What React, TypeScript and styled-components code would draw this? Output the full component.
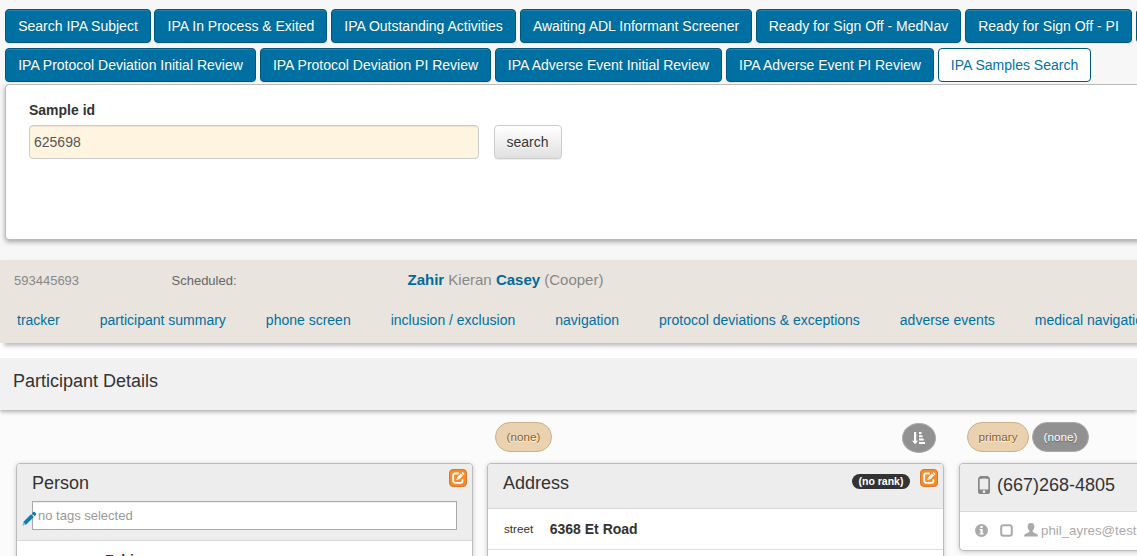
import React from "react";
import styled, { createGlobalStyle } from "styled-components";

const Global = createGlobalStyle`
  * { box-sizing: border-box; }
  html, body { margin: 0; overflow: hidden; background: #f7f7f7; }
  body { font-family: "Liberation Sans", Arial, sans-serif; font-size: 14px; line-height: 20px; color: #333; }
`;
const Page = styled.div`height: 556px; width: 1137px; overflow: hidden; display: flex; flex-direction: column;`;
const Nav = styled.nav`padding: 9px 0 0 5px; display: flex; flex-direction: column; gap: 5px; flex: none;`;
const NavRow = styled.div`display: flex; gap: 4px; white-space: nowrap;`;
const Tab = styled.a<{ $w: number; $active?: boolean; $pull?: boolean }>`
  flex: none; width: ${p => p.$w}px; height: 34px; text-align: center; line-height: 20px;
  padding: 6px 0 6px ${p => (p.$pull ? "1px" : "0")};
  margin-left: ${p => (p.$pull ? "-1px" : "0")};
  border: 1px solid #00567d; border-radius: 4px;
  color: ${p => (p.$active ? "#0072a3" : "#fff")};
  background: ${p => (p.$active ? "#fff" : "#0070a2")};
  box-shadow: ${p => (p.$active ? "none" : "inset 0 1px 0 rgba(255,255,255,.15), 0 1px 1px rgba(0,0,0,.075)")};
  text-shadow: ${p => (p.$active ? "none" : "0 -1px 0 rgba(0,0,0,.2)")};
`;
const SearchPanel = styled.section`
  flex: none; margin: 2px -10px 0 5px; height: 156px; padding: 15px 23px; background: #fff;
  border: 1px solid #bbb; border-radius: 4px; box-shadow: 0 2px 5px rgba(0,0,0,.33);
  clip-path: inset(0 0 -10px -10px);
`;
const Label = styled.label`display: block; font-weight: bold; margin-bottom: 5px; height: 20px;`;
const FieldRow = styled.div`display: flex; gap: 15px;`;
const Field = styled.div`
  width: 450px; height: 34px; padding: 6px 4px; color: #555; background: #fff4e0;
  border: 1px solid #ccc; border-radius: 4px; box-shadow: inset 0 1px 1px rgba(0,0,0,.075);
`;
const SearchButton = styled.button`
  width: 68px; height: 34px; padding: 0 1px 0 0; font: inherit; color: #333; border: 1px solid #ccc; border-radius: 4px;
  background: linear-gradient(#fff, #e0e0e0); text-shadow: 0 1px 0 #fff; box-shadow: 0 1px 1px rgba(0,0,0,.075);
`;
const Subject = styled.section`
  flex: none; margin-top: 20px; height: 83px; background: #e9e4de; position: relative; z-index: 1;
  box-shadow: 4px 3px 4px rgba(0,0,0,.25); padding-top: 11px;
`;
const SubjectLine = styled.div`display: grid; grid-template-columns: 157.500px 236px 1fr; padding-left: 14px; color: #888; font-size: 13px; height: 20px;`;
const Scheduled = styled.span`color: #666;`;
const Name = styled.span`font-size: 15px; line-height: 18px; b { color: #006a9b; }`;
const Links = styled.div`display: flex; gap: 40px; white-space: nowrap; padding: 19px 0 0 17px; color: #0070a2;`;
const TitleWrap = styled.div`flex: none; background: #fff; padding-top: 15px;`;
const TitleBar = styled.header`
  height: 52px; padding: 13px; background: #f1f1f1; font-size: 18px; position: relative;
  box-shadow: 0 2px 4px rgba(0,0,0,.3); clip-path: inset(0 0 -10px 0);
`;
const Details = styled.main`
  flex: 1; min-height: 0; background: #fbfbfb; padding: 12px 0 0 16px; display: grid;
  grid-template-columns: 457px 457px 457px; column-gap: 14.5px;
`;
const Column = styled.div<{ $nudge?: boolean }>`
  display: flex; flex-direction: column; margin: 0 ${p => (p.$nudge ? "0.5px 0 -0.5px" : "0")};
`;
const Badges = styled.div`display: flex; gap: 3px; height: 30px; margin: 0 8px 11px;`;
const Pill = styled.span<{ $w: number; $dark?: boolean }>`
  width: ${p => p.$w}px; height: 30px; border-radius: 15px; text-align: center; font-size: 11.7px; line-height: 28px;
  border: 1px solid ${p => (p.$dark ? "#aaa" : "#cbb08a")};
  background: ${p => (p.$dark ? "#919191" : "#ead2b0")};
  color: ${p => (p.$dark ? "#fff" : "#8a5f22")};
  text-shadow: 0 1px 1px ${p => (p.$dark ? "rgba(0,0,0,.3)" : "#fff")};
`;
const SortButton = styled.span`
  margin: 1px 0 0 auto; width: 34px; height: 30px; border-radius: 50%; border: 1px solid #aaa;
  background: #919191; color: #fff; display: grid; place-items: center;
`;
const Card = styled.article<{ $h: number }>`
  height: ${p => p.$h}px; border: 1px solid #bbb; border-radius: 4px; background: #fff; overflow: hidden;
  box-shadow: 0 1px 5px rgba(0,0,0,.2);
`;
const CardHead = styled.div<{ $h: number }>`
  height: ${p => p.$h}px; background: #ededed; border-bottom: 1px solid #d8d8d8; padding: 5px 5px 0 15px;
`;
const HeadLine = styled.div`display: flex; gap: 10px; height: 32px;`;
const CardTitle = styled.h4`margin: 0; font-size: 18px; line-height: 28px; font-weight: normal; flex: 1;`;
const EditButton = styled.span`
  width: 18px; height: 18px; border-radius: 4px; background: #f68b2c; border: 1px solid #d8762a; color: #fff;
  display: grid; place-items: center;
`;
const Rank = styled.span`
  width: 58px; height: 15px; margin-top: 5px; border-radius: 8px; background: #333; color: #fff;
  font-size: 10.5px; line-height: 15px; font-weight: bold; text-align: center;
`;
const TagInput = styled.div`
  width: 425px; height: 29px; border: 1px solid #aaa; background: #fff; color: #999; font-size: 13px;
  line-height: 28px; padding-left: 5px; position: relative; box-shadow: inset 0 1px 1px rgba(0,0,0,.07);
`;
const PencilSlot = styled.span`position: absolute; left: -11px; top: 9px; width: 16px; height: 16px; line-height: 0;`;
const Row = styled.div`
  height: 41px; border-bottom: 1px solid #ddd; display: flex; align-items: center; padding-left: 16px; gap: 16.5px;
  font-size: 11.7px; b { font-size: 14px; }
`;
const PersonRow = styled.div`padding: 9px 0 0 88px; font-weight: bold;`;
const Phone = styled.div`display: flex; align-items: center; gap: 7px; margin-left: 3px; height: 32px; font-size: 18px; svg { color: #888; }`;
const Contact = styled.div`
  display: flex; align-items: center; height: 38px; padding-left: 15px; color: #aaa; font-size: 13.3px;
  svg { margin: 0 11.5px 2px 0; flex: none; } svg:last-of-type { margin-right: 3px; }
`;

const EditIcon = () => (
  <svg width="14" height="14" viewBox="0 0 14 14" fill="none">
    <path d="M7.800 2.500H4A2 2 0 0 0 2.200 4.500V9.800a2 2 0 0 0 2 2h5.300a2 2 0 0 0 2-2V8.200" stroke="currentColor" strokeWidth="1.800" />
    <path d="M5.300 9.300 6 6.500 10 2.500 12 4.500 8 8.500ZM10.600 1.900l1-1 2 2-1 1Z" fill="currentColor" />
    <path d="m6.300 7.500 1 1" stroke="#f68b2c" strokeWidth=".8" />
  </svg>
);
const SortIcon = () => (
  <svg width="14" height="14" viewBox="0 0 14 14" fill="currentColor">
    <path d="M2 1h2.200v8.800h1.900L3.100 13.300.1 9.800H2ZM7 1h2.500v2H7ZM7 4.300h3.500v2H7ZM7 7.600h4.700v2H7ZM7 11h6v2H7Z" />
  </svg>
);
const PencilIcon = () => (
  <svg width="15" height="15" viewBox="0 0 15 15" fill="#0a7fb8">
    <path d="M.5 14.500 1.700 10.500 9 3.200 11.800 6 4.500 13.300ZM9.800 2.400l1.300-1.300a1.200 1.200 0 0 1 1.700 0l1.100 1.100a1.200 1.200 0 0 1 0 1.700l-1.300 1.300Z" />
    <path d="m1.700 11.600 1.700 1.700-1.700.5-.5-.5Z" fill="#eee" />
  </svg>
);
const PhoneIcon = () => (
  <svg width="12" height="18" viewBox="0 0 12 18">
    <path fill="currentColor" fillRule="evenodd" d="M2.500 0h7Q12 .8 12 3v13a2 2 0 0 1-2 2H2a2 2 0 0 1-2-2V3Q0 .8 2.500 0ZM1.700 3v10.500h8.600V3Q6 1.800 1.700 3ZM6 14.300a1.400 1.400 0 1 0 0 2.800 1.400 1.400 0 0 0 0-2.800Z" />
  </svg>
);
const InfoIcon = () => (
  <svg width="13" height="13" viewBox="0 0 13 13">
    <circle cx="6.500" cy="6.500" r="6.500" fill="currentColor" />
    <path fill="#fff" d="M5.400 2h2.300v2H5.400ZM4.500 5h3.200v4.200h1v1.300H4.500V9.200h1V6.300h-1Z" />
  </svg>
);
const BoxIcon = () => (
  <svg width="13" height="13" viewBox="0 0 13 13"><rect x="1.200" y="1.200" width="10.600" height="10.600" rx="2.300" fill="none" stroke="currentColor" strokeWidth="2" /></svg>
);
const UserIcon = () => (
  <svg width="14" height="14" viewBox="0 0 14 14" fill="currentColor">
    <path d="M7 0c2.400 0 3.400 1.500 3.400 3.600 0 1.700-.7 3.200-1.700 4.200v1.300l4 1.800c.7.300 1.100.8 1.100 1.400V13.500H.2v-1.200c0-.6.400-1.100 1.100-1.400l4-1.800V7.800c-1-1-1.700-2.500-1.700-4.200C3.600 1.500 4.600 0 7 0Z" />
  </svg>
);

export default function App() {
  return (
    <Page>
      <Global />
      <Nav>
        <NavRow>
          <Tab $w={146}>Search IPA Subject</Tab>
          <Tab $w={173} $pull>IPA In Process &amp; Exited</Tab>
          <Tab $w={185}>IPA Outstanding Activities</Tab>
          <Tab $w={232}>Awaiting ADL Informant Screener</Tab>
          <Tab $w={205}>Ready for Sign Off - MedNav</Tab>
          <Tab $w={167}>Ready for Sign Off - PI</Tab>
          <Tab $w={120} />
        </NavRow>
        <NavRow>
          <Tab $w={251}>IPA Protocol Deviation Initial Review</Tab>
          <Tab $w={231}>IPA Protocol Deviation PI Review</Tab>
          <Tab $w={227}>IPA Adverse Event Initial Review</Tab>
          <Tab $w={208}>IPA Adverse Event PI Review</Tab>
          <Tab $w={153} $active>IPA Samples Search</Tab>
        </NavRow>
      </Nav>
      <SearchPanel>
        <Label>Sample id</Label>
        <FieldRow>
          <Field>625698</Field>
          <SearchButton>search</SearchButton>
        </FieldRow>
      </SearchPanel>
      <Subject>
        <SubjectLine>
          <span>593445693</span>
          <Scheduled>Scheduled:</Scheduled>
          <Name><b>Zahir</b> Kieran <b>Casey</b> (Cooper)</Name>
        </SubjectLine>
        <Links>
          <span>tracker</span>
          <span>participant summary</span>
          <span>phone screen</span>
          <span>inclusion / exclusion</span>
          <span>navigation</span>
          <span>protocol deviations &amp; exceptions</span>
          <span>adverse events</span>
          <span>medical navigation</span>
        </Links>
      </Subject>
      <TitleWrap><TitleBar>Participant Details</TitleBar></TitleWrap>
      <Details>
        <Column>
          <Badges />
          <Card $h={200}>
            <CardHead $h={77}>
              <HeadLine><CardTitle>Person</CardTitle><EditButton><EditIcon /></EditButton></HeadLine>
              <TagInput>no tags selected<PencilSlot><PencilIcon /></PencilSlot></TagInput>
            </CardHead>
            <PersonRow>Zahir</PersonRow>
          </Card>
        </Column>
        <Column $nudge>
          <Badges><Pill $w={57}>(none)</Pill><SortButton><SortIcon /></SortButton></Badges>
          <Card $h={200}>
            <CardHead $h={45}>
              <HeadLine><CardTitle>Address</CardTitle><Rank>(no rank)</Rank><EditButton><EditIcon /></EditButton></HeadLine>
            </CardHead>
            <Row>street <b>6368 Et Road</b></Row>
          </Card>
        </Column>
        <Column>
          <Badges><Pill $w={62}>primary</Pill><Pill $w={57} $dark>(none)</Pill></Badges>
          <Card $h={88}>
            <CardHead $h={48}><Phone><PhoneIcon />(667)268-4805</Phone></CardHead>
            <Contact><InfoIcon /><BoxIcon /><UserIcon />phil_ayres@test.com</Contact>
          </Card>
        </Column>
      </Details>
    </Page>
  );
}
